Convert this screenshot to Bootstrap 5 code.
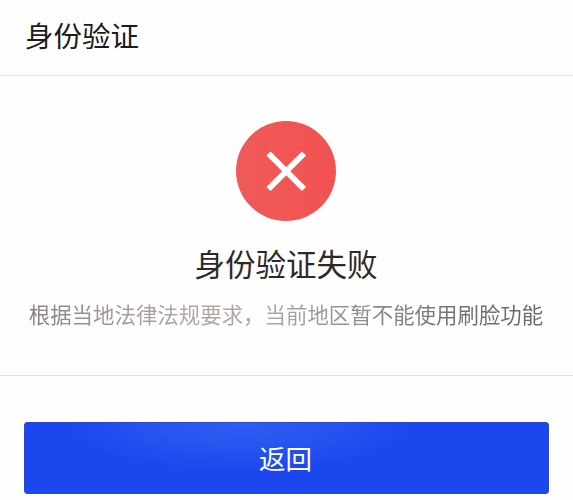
<!DOCTYPE html>
<html lang="zh-CN">
<head>
<meta charset="utf-8">
<meta name="viewport" content="width=device-width, initial-scale=1">
<title>身份验证</title>
<link href="https://cdn.jsdelivr.net/npm/bootstrap@5.3.0/dist/css/bootstrap.min.css" rel="stylesheet">
<style>
body { font-family: "Noto Sans CJK SC", sans-serif; background: #fefefe; min-height: 500px; overflow: hidden; }
.page-head { height: 76px; padding: 0 25px 6px; border-bottom: 1px solid #dfdfdf; }
.page-title { font-size: 28.5px; font-weight: 400; line-height: 40px; color: #1b1b1b; }
.result { height: 300px; padding: 45px 1px 0 0; border-bottom: 1px solid #e0e0e0; }
.result-icon { width: 100px; height: 100px; }
.result-title { font-size: 30.5px; font-weight: 400; line-height: 44px; margin-top: 20px; color: #2d2929; }
.result-text {
  font-size: 21.45px; line-height: 32px; margin-top: 13px;
  background: linear-gradient(90deg, #858080 0, #9e9592 14%, #b0a5a2 30%, #aaa3a2 50%, #8e8989 66%, #747272 82%, #686868 100%);
  -webkit-background-clip: text; background-clip: text; color: transparent;
}
.actions { padding: 46px 24px 0; }
.btn-back {
  height: 72px; padding: 0 2px 0 0; font-size: 26.5px; line-height: 40px; color: #fff; border: 1px solid #2949d0; border-radius: 3px;
  background: radial-gradient(ellipse 175px 48px at 215px 0, #2d5df2 0, #2857f0 40%, #1c47ef 100%);
}
</style>
<script src="https://cdn.jsdelivr.net/npm/bootstrap@5.3.0/dist/js/bootstrap.bundle.min.js"></script>
</head>
<body>
<header class="page-head d-flex align-items-center">
  <h1 class="page-title mb-0">身份验证</h1>
</header>
<main>
  <section class="result d-flex flex-column align-items-center">
    <svg class="result-icon flex-shrink-0" viewBox="0 0 100 100" aria-hidden="true">
      <defs><linearGradient id="disc"><stop stop-color="#ef5a58"/><stop offset="1" stop-color="#f25251"/></linearGradient></defs>
      <circle cx="50" cy="50" r="50" fill="url(#disc)"/>
      <path d="M32.5 32.5 68 68M68 32.5 32.5 68" stroke="#fff" stroke-width="6" fill="none"/>
    </svg>
    <h2 class="result-title mb-0">身份验证失败</h2>
    <p class="result-text mb-0 text-nowrap">根据当地法律法规要求，当前地区暂不能使用刷脸功能</p>
  </section>
  <div class="actions">
    <button type="button" class="btn btn-back w-100 d-flex align-items-center justify-content-center">返回</button>
  </div>
</main>
</body>
</html>
